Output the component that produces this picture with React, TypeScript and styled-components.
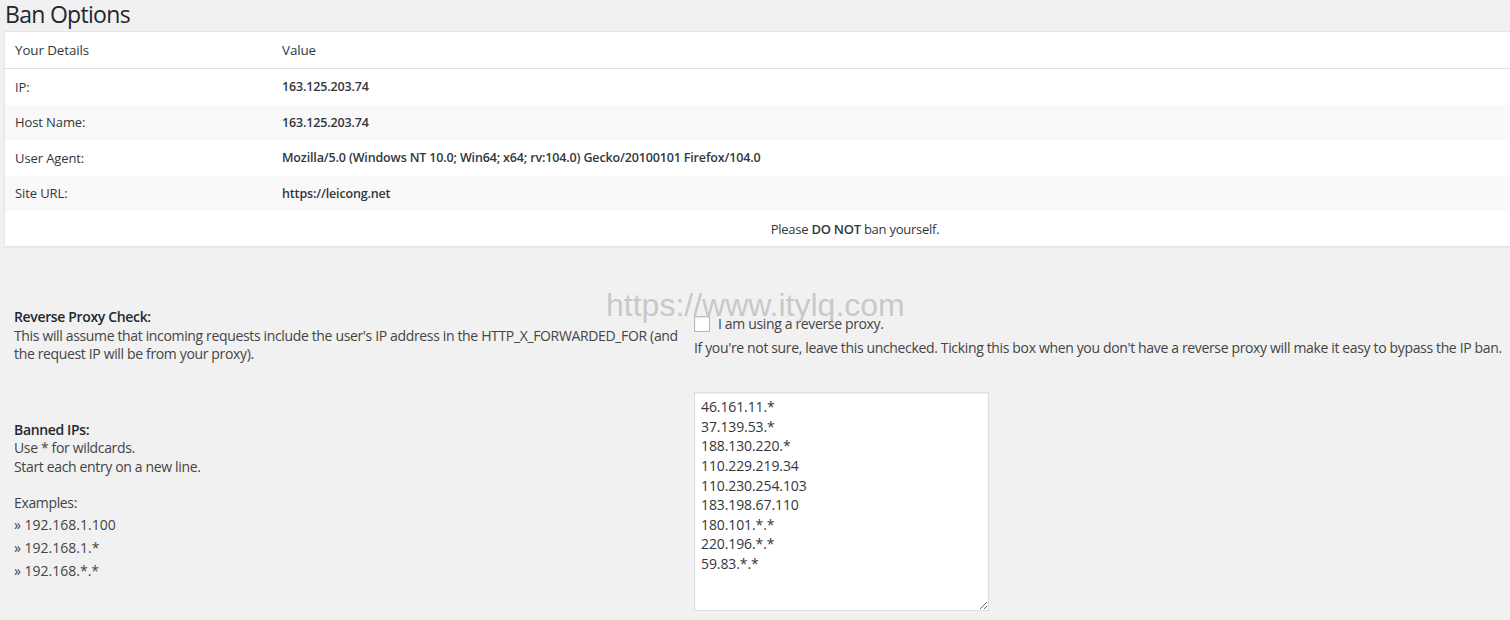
import React from "react";
import styled, { createGlobalStyle } from "styled-components";

const Global = createGlobalStyle`
  html, body { margin: 0; padding: 0; background: #f1f1f1; overflow: hidden; }
  body { font-family: "Open Sans", "Noto Sans", sans-serif; color: #444; }
`;

const Page = styled.div`
  position: relative;
  width: 1510px;
  height: 620px;
  overflow: hidden;
  padding-left: 4px;
  box-sizing: border-box;
`;

const Title = styled.h1`
  margin: 0 0 2px 1px;
  font-size: 23px;
  font-weight: 400;
  line-height: 29px;
  letter-spacing: -0.7px;
  color: #23282d;
`;

const Table = styled.div`
  width: 1700px;
  background: #fff;
  border: 1px solid #e5e5e5;
  box-shadow: 0 1px 1px rgba(0, 0, 0, 0.04);
  color: #32373c;
`;

const Row = styled.div<{ $alt?: boolean; $head?: boolean }>`
  display: grid;
  grid-template-columns: 267px 1fr;
  align-items: center;
  height: ${(p) => (p.$head ? "36px" : "35.5px")};
  background: ${(p) => (p.$alt ? "#f9f9f9" : "#fff")};
  border-bottom: ${(p) => (p.$head ? "1px solid #e1e1e1" : "none")};
  font-size: ${(p) => (p.$head ? "13.4px" : "13px")};
`;

const Cell = styled.div<{ $strong?: boolean }>`
  padding-left: 10px;
  white-space: nowrap;
  font-weight: ${(p) => (p.$strong ? 600 : 400)};
  font-size: ${(p) => (p.$strong ? "12.5px" : "inherit")};
  letter-spacing: ${(p) => (p.$strong ? "-0.15px" : "-0.1px")};
`;

const NoteRow = styled.div`
  height: 35px;
  display: flex;
  align-items: center;
  justify-content: center;
  font-size: 13px;
  letter-spacing: -0.25px;
`;

const Strong = styled.b`
  font-weight: 600;
`;

const Form = styled.div`
  margin-top: 61px;
  padding-left: 10px;
  display: flex;
  flex-direction: column;
  gap: 28px;
  font-size: 14px;
  color: #444;
  letter-spacing: -0.35px;
`;

const FormRow = styled.div`
  display: grid;
  grid-template-columns: 680px 1fr;
  align-items: center;
`;

const Label = styled.div`
  padding-right: 6px;
  line-height: 18.6px;
`;

const LabelTitle = styled.div`
  font-weight: 600;
  color: #23282d;
`;

const Example = styled.div`
  line-height: 23px;
  letter-spacing: 0;
`;

const Spacer = styled.div`
  height: 18px;
`;

const CheckLine = styled.label`
  display: flex;
  align-items: center;
  gap: 8px;
  line-height: 18px;
`;

const Checkbox = styled.span`
  width: 16px;
  height: 16px;
  box-sizing: border-box;
  border: 1px solid #b4b9be;
  background: #fff;
  box-shadow: inset 0 1px 2px rgba(0, 0, 0, 0.1);
`;

const Help = styled.p`
  margin: 6px 0 0;
  line-height: 18px;
  white-space: nowrap;
`;

const Area = styled.textarea`
  display: block;
  width: 295px;
  height: 219px;
  box-sizing: border-box;
  border: 1px solid #ddd;
  box-shadow: inset 0 1px 2px rgba(0, 0, 0, 0.07);
  background: #fff;
  padding: 4.5px 6px 3px;
  margin: 0;
  font-family: "Open Sans", "Noto Sans", sans-serif;
  font-size: 14px;
  letter-spacing: -0.1px;
  line-height: 19.6px;
  color: #32373c;
  outline: none;
`;

const Watermark = styled.div`
  position: absolute;
  left: 606px;
  top: 289px;
  font-family: "Liberation Sans", Arial, sans-serif;
  font-size: 32px;
  line-height: 32px;
  color: rgba(160, 160, 160, 0.5);
  pointer-events: none;
  white-space: nowrap;
`;

const details = [
  ["IP:", "163.125.203.74"],
  ["Host Name:", "163.125.203.74"],
  ["User Agent:", "Mozilla/5.0 (Windows NT 10.0; Win64; x64; rv:104.0) Gecko/20100101 Firefox/104.0"],
  ["Site URL:", "https://leicong.net"],
];

const ips = [
  "46.161.11.*",
  "37.139.53.*",
  "188.130.220.*",
  "110.229.219.34",
  "110.230.254.103",
  "183.198.67.110",
  "180.101.*.*",
  "220.196.*.*",
  "59.83.*.*",
].join("\n");

export default function App() {
  return (
    <Page>
      <Global />
      <Title>Ban Options</Title>
      <Table>
        <Row $head>
          <Cell>Your Details</Cell>
          <Cell>Value</Cell>
        </Row>
        {details.map(([k, v], i) => (
          <Row key={k} $alt={i % 2 === 1}>
            <Cell>{k}</Cell>
            <Cell $strong>{v}</Cell>
          </Row>
        ))}
        <NoteRow>
          <span>
            Please <Strong>DO NOT</Strong> ban yourself.
          </span>
        </NoteRow>
      </Table>
      <Form>
        <FormRow>
          <Label>
            <LabelTitle>Reverse Proxy Check:</LabelTitle>
            This will assume that incoming requests include the user's IP address in the HTTP_X_FORWARDED_FOR (and
            the request IP will be from your proxy).
          </Label>
          <div>
            <CheckLine>
              <Checkbox />
              I am using a reverse proxy.
            </CheckLine>
            <Help>
              If you're not sure, leave this unchecked. Ticking this box when you don't have a reverse proxy will make it
              easy to bypass the IP ban.
            </Help>
          </div>
        </FormRow>
        <FormRow>
          <Label>
            <LabelTitle>Banned IPs:</LabelTitle>
            Use * for wildcards.
            <br />
            Start each entry on a new line.
            <Spacer />
            Examples:
            <Example>» 192.168.1.100</Example>
            <Example>» 192.168.1.*</Example>
            <Example>» 192.168.*.*</Example>
          </Label>
          <div>
            <Area defaultValue={ips} spellCheck={false} />
          </div>
        </FormRow>
      </Form>
      <Watermark>https://www.itylq.com</Watermark>
    </Page>
  );
}
